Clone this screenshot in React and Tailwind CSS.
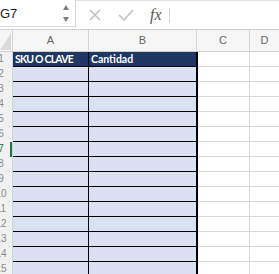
import React from "react";

const ROWS = Array.from({ length: 15 }, (_, i) => i + 1);

// left edge of the row headers is scrolled out of view, so numbers are clipped
const RowHeader = ({ n, active }) => (
  <div className="relative w-[13px] h-full shrink-0 overflow-hidden bg-[#f1f1f1] border-r border-[#d4d4d4]">
    <div
      className={
        active
          ? "ml-[-12px] w-[26px] text-center text-[10px] leading-[14px] text-[#217346]"
          : "ml-[-12px] w-[26px] text-center text-[10px] leading-[14px] text-[#8a8a8a]"
      }
    >
      {n}
    </div>
    {active && <div className="absolute right-0 top-0 h-full w-[2px] bg-[#217346]" />}
  </div>
);

const FormulaBar = () => (
  <div className="flex h-[30px] border-b border-[#cfcfcf] bg-white">
    <div className="flex w-[76px] h-[27px] items-center border-r border-b border-[#d6d6d6] pr-[6px]">
      <span className="flex-1 text-[13px] text-[#222] leading-none">G7</span>
      <div className="flex flex-col gap-[7px]">
        <svg width="6" height="5" viewBox="0 0 6 5">
          <polygon points="3,0 6,5 0,5" fill="#7d7d7d" />
        </svg>
        <svg width="6" height="5" viewBox="0 0 6 5">
          <polygon points="0,0 6,0 3,5" fill="#7d7d7d" />
        </svg>
      </div>
    </div>
    <div className="flex flex-1 items-center border-t border-[#e4e4e4]">
      <svg className="ml-[13px]" width="12" height="12" viewBox="0 0 12 12">
        <path d="M1 1 L11 11 M11 1 L1 11" stroke="#c2c2c2" strokeWidth="1.6" />
      </svg>
      <svg className="ml-[17px]" width="16" height="12" viewBox="0 0 16 12">
        <path d="M1 6 L6 11 L15 1" stroke="#c2c2c2" strokeWidth="1.6" fill="none" />
      </svg>
      <span
        className="ml-[16px] text-[16px] italic text-[#555] leading-none"
        style={{ fontFamily: '"Liberation Serif", serif' }}
      >
        fx
      </span>
      <div className="ml-[7px] h-[15px] w-px bg-[#d6d6d6]" />
    </div>
  </div>
);

const ColumnHeader = () => (
  <div className="flex h-[22px] border-b border-[#cfcfcf] bg-[#f6f6f6] text-[11px] text-[#666]">
    <div className="w-[13px] shrink-0 border-r border-[#d4d4d4] flex items-end">
      <svg width="12" height="21" viewBox="0 0 12 21">
        <polygon points="11,3 11,20 0,20" fill="#dadada" />
      </svg>
    </div>
    <div className="w-[76px] shrink-0 border-r border-[#d4d4d4] flex items-center justify-center">A</div>
    <div className="w-[108px] shrink-0 border-r border-[#d4d4d4] flex items-center justify-center">B</div>
    <div className="w-[53px] shrink-0 border-r border-[#d4d4d4] flex items-center justify-center">C</div>
    <div className="flex-1 flex items-center justify-center">D</div>
  </div>
);

const titleCls =
  "shrink-0 bg-[#203764] border-b border-black pl-[2px] text-[10.5px] font-bold leading-[14px] text-white font-['Lato',sans-serif]";

const Row = ({ n }) => {
  const first = n === 1;
  return (
    <div className="flex h-[15px]">
      <RowHeader n={n} active={n === 7} />
      <div
        className={
          first
            ? `w-[76px] border-r tracking-[-0.8px] ${titleCls}`
            : "w-[76px] shrink-0 bg-[#d9e1f2] border-r border-b border-black"
        }
      >
        {first && "SKU O CLAVE"}
      </div>
      <div
        className={
          first
            ? `w-[109px] border-r-2 ${titleCls}`
            : "w-[109px] shrink-0 bg-[#d9e1f2] border-r-2 border-b border-black"
        }
      >
        {first && "Cantidad"}
      </div>
      <div className="w-[52px] shrink-0 border-r border-b border-[#d9d9d9]" />
      <div className="flex-1 border-b border-[#d9d9d9]" />
    </div>
  );
};

export default function App() {
  return (
    <div
      className="w-[279px] h-[274px] overflow-hidden bg-white"
      style={{ fontFamily: '"Liberation Sans", Arial, sans-serif' }}
    >
      <FormulaBar />
      <ColumnHeader />
      {ROWS.map((n) => (
        <Row key={n} n={n} />
      ))}
    </div>
  );
}
